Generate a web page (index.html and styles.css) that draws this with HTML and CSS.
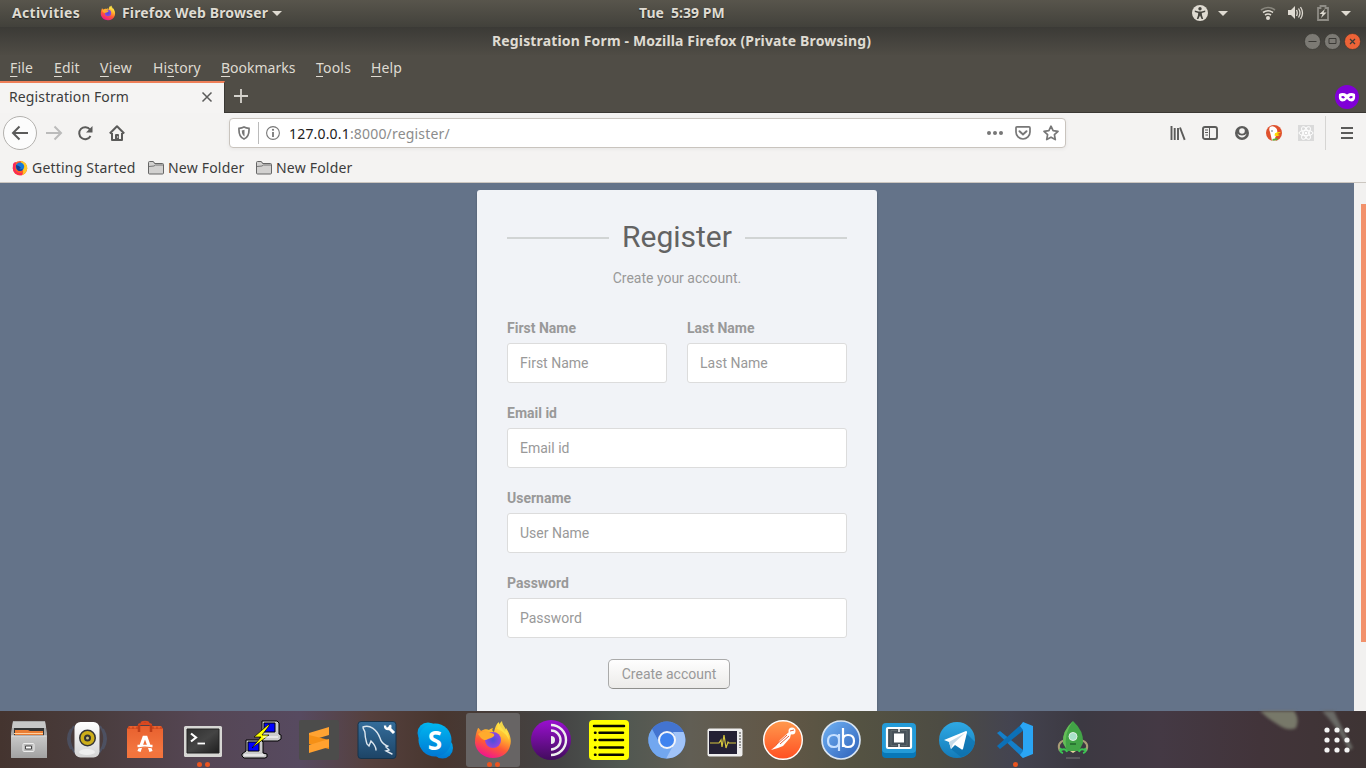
FILE: index.html
```
<!DOCTYPE html>
<html lang="en">
<head>
<meta charset="utf-8">
<title>Registration Form</title>
<link rel="stylesheet" href="styles.css">
</head>
<body>
<svg width="0" height="0" class="defs">
  <defs>
    <linearGradient id="g-flame" x1=".8" y1="0" x2=".35" y2="1"><stop offset="0" stop-color="#fff04a"/><stop offset=".35" stop-color="#ffb92e"/><stop offset=".65" stop-color="#ff5a35"/><stop offset="1" stop-color="#ef1490"/></linearGradient>
    <radialGradient id="g-globe"><stop offset="0" stop-color="#4a50d8"/><stop offset="1" stop-color="#9146e0"/></radialGradient>
    <linearGradient id="g-grey" x1="0" y1="0" x2="0" y2="1"><stop offset="0" stop-color="#c9c9c9"/><stop offset="1" stop-color="#a2a2a2"/></linearGradient>
    <linearGradient id="g-white" x1="0" y1="0" x2="0" y2="1"><stop offset="0" stop-color="#fff"/><stop offset="1" stop-color="#d4d4d4"/></linearGradient>
    <linearGradient id="g-orange" x1="0" y1="0" x2="0" y2="1"><stop offset="0" stop-color="#e8602e"/><stop offset="1" stop-color="#f67c45"/></linearGradient>
    <linearGradient id="g-term" x1="0" y1="0" x2="1" y2="1"><stop offset="0" stop-color="#303030"/><stop offset=".5" stop-color="#444"/><stop offset="1" stop-color="#1f1f1f"/></linearGradient>
    <linearGradient id="g-mysql" x1="0" y1="0" x2="0" y2="1"><stop offset="0" stop-color="#346d9b"/><stop offset="1" stop-color="#1d4466"/></linearGradient>
    <linearGradient id="g-skype" x1="0" y1="0" x2="0" y2="1"><stop offset="0" stop-color="#00b7f0"/><stop offset="1" stop-color="#0078d4"/></linearGradient>
    <linearGradient id="g-tor" x1="0" y1="0" x2="0" y2="1"><stop offset="0" stop-color="#9a0fd0"/><stop offset="1" stop-color="#420c5d"/></linearGradient>
    <linearGradient id="g-post" x1="0" y1="0" x2="0" y2="1"><stop offset="0" stop-color="#ff9a4e"/><stop offset="1" stop-color="#ff4f22"/></linearGradient>
    <linearGradient id="g-qb" x1="0" y1="0" x2="1" y2="1"><stop offset="0" stop-color="#72b4f5"/><stop offset="1" stop-color="#2c5fb8"/></linearGradient>
    <linearGradient id="g-tg" x1="0" y1="0" x2="0" y2="1"><stop offset="0" stop-color="#2fa9e4"/><stop offset="1" stop-color="#147cba"/></linearGradient>
    <symbol id="firefox" viewBox="0 0 40 40">
      <path fill="url(#g-flame)" d="M5 8c1 0 2 2 3 3 3-2 6-2 8-1 1-1 3-2 4-2-1 2-1 3 1 4 1-4 2-8 5-10 0 4 3 6 6 10l1-4c4 6 6 12 4 18-2 8-9 12-17 12C10 38 3 31 2 23c0-6 1-10 3-15z"/>
      <circle cx="20" cy="20" r="8" fill="url(#g-globe)"/>
      <path fill="#ffab2d" d="M5 14c4-3 9-3 12-1 3 0 5 1 4 3-2 2-4 2-6 3-2 2-5 1-7-1z"/>
      <path fill="#ffe047" d="M24 9c1-4 3-6 5-8 0 5 7 9 7 19-2-5-6-9-12-11z" opacity=".9"/>
    </symbol>
  </defs>
</svg>

<header class="topbar">
  <span class="activities">Activities</span>
  <svg class="app-logo" width="16" height="16"><use href="#firefox"/></svg>
  <span class="app-name">Firefox Web Browser</span>
  <i class="caret"></i>
  <span class="clock">Tue&nbsp; 5:39 PM</span>
  <div class="tray">
    <svg width="16" height="16" viewBox="0 0 16 16"><circle cx="8" cy="8" r="8" fill="#dfdbd2"/><circle cx="8" cy="3.700" r="1.700" fill="#45443e"/><path d="M2.800 5.400l3.700 1h3l3.700-1v1.500l-3.400 1.100.2 2.200 1.200 3.800H9.600L8 10.500 6.400 14H4.800L6 10.200 6.200 8 2.800 6.900z" fill="#45443e"/></svg>
    <i class="caret"></i>
    <svg class="wifi" width="16" height="16" viewBox="0 0 16 16" fill="none" stroke="#dfdbd2" stroke-width="1.600"><path d="M1 5q7-5 14 0" opacity=".4"/><path d="M3 7.500q5-3.500 10 0M5 10q3-2 6 0"/><circle cx="8" cy="13" r="2" fill="#dfdbd2" stroke="none"/></svg>
    <svg class="sound" width="17" height="16" viewBox="0 0 17 16"><path d="M1 5h3l4-4v13l-4-4H1z" fill="#dfdbd2"/><path d="M9.500 5q1.500 3 0 6M11.500 3.500q3 4.500 0 9M13.500 2q4 6 0 12" fill="none" stroke="#dfdbd2" stroke-width="1.300"/></svg>
    <svg class="battery" width="12" height="16" viewBox="0 0 12 16"><path d="M1 3h2.500V1h5v2H11v12H1z" fill="none" stroke="#8e8c85" stroke-width="1.800"/><path d="M8 4L2.500 9H5.500L4 13l5.500-5.500h-3z" fill="#dfdbd2"/></svg>
    <i class="caret"></i>
  </div>
</header>

<div class="titlebar">
  <span class="window-title">Registration Form - Mozilla Firefox (Private Browsing)</span>
  <div class="window-buttons">
    <svg width="17" height="17" viewBox="0 0 17 17"><circle cx="8.500" cy="8.500" r="8" fill="#7c7a74" stroke="#33322e" stroke-width=".6"/><path d="M4.500 8.500h8" stroke="#3c3b37"/></svg>
    <svg width="17" height="17" viewBox="0 0 17 17"><circle cx="8.500" cy="8.500" r="8" fill="#7c7a74" stroke="#33322e" stroke-width=".6"/><path d="M5 5.500h7v5H5z" fill="none" stroke="#3c3b37"/></svg>
    <svg width="17" height="17" viewBox="0 0 17 17"><circle cx="8.500" cy="8.500" r="8" fill="#ed6337" stroke="#33322e" stroke-width=".6"/><path d="M6 6l5 5m0-5l-5 5" stroke="#3c3b37" stroke-width="1.300"/></svg>
  </div>
</div>

<nav class="menubar">
  <span class="m-file"><u>F</u>ile</span><span class="m-edit"><u>E</u>dit</span><span class="m-view"><u>V</u>iew</span><span class="m-history">Hi<u>s</u>tory</span><span class="m-bookmarks"><u>B</u>ookmarks</span><span class="m-tools"><u>T</u>ools</span><span class="m-help"><u>H</u>elp</span>
</nav>

<div class="tabs">
  <div class="tab"><span>Registration Form</span>
    <svg width="12" height="12" viewBox="0 0 12 12"><path d="M1.500 1.500l9 9m0-9l-9 9" stroke="#5b5b5a" stroke-width="1.500"/></svg>
  </div>
  <svg class="new-tab" width="14" height="14" viewBox="0 0 14 14"><path d="M7 0v14M0 7h14" stroke="#d5d3cd" stroke-width="1.800"/></svg>
  <svg class="mask" width="24" height="24" viewBox="0 0 24 24"><circle cx="12" cy="12" r="12" fill="#8000d7"/><path d="M4 9q4-2 8 .5Q16 7 20 9q1 7-3 7.500-3 0-5-2.500-2 2.500-5 2.500Q3 16 4 9z" fill="#fff"/><path d="M6 12q2-2 4 .5-2 2-4-.5m8 .5q2-2.500 4-.5-2 2.500-4 .5" fill="#8000d7"/></svg>
</div>

<div class="toolbar">
  <div class="back"><svg width="18" height="16" viewBox="0 0 18 16"><path d="M17 8H2m6.500-6.500L2 8l6.500 6.500" fill="none" stroke="#5b5b5a" stroke-width="2"/></svg></div>
  <svg class="fwd" width="18" height="16" viewBox="0 0 18 16"><path d="M1 8h15M9.500 1.500L16 8l-6.500 6.500" fill="none" stroke="#bbb" stroke-width="2"/></svg>
  <svg class="reload" width="16" height="16" viewBox="0 0 16 16"><path d="M13 4.500A6 6 0 1 0 13.500 11" fill="none" stroke="#5b5b5a" stroke-width="2"/><path d="M15.500 1v6.500H9z" fill="#5b5b5a"/></svg>
  <svg class="home" width="16" height="16" viewBox="0 0 16 16"><path d="M.8 8.500L8 1.300l7.200 7.200M3 8v7h10V8" fill="none" stroke="#5b5b5a" stroke-width="2" stroke-linejoin="round"/><path d="M6 15v-5q0-1 1-1h2q1 0 1 1v5z" fill="#5b5b5a"/><circle cx="8.700" cy="12" r=".7" fill="#f4f3f2"/></svg>
  <div class="urlbar">
    <svg width="12" height="14" viewBox="0 0 12 14"><path d="M1 2.300Q4 2 6 1q2 1 5 1.300Q11.500 11 6 13 .5 11 1 2.300z" fill="none" stroke="#777" stroke-width="1.700"/><path d="M6.500 3.800v6.700Q3.800 9 3.800 4.500z" fill="#777"/></svg>
    <i class="url-sep"></i>
    <svg width="14" height="14" viewBox="0 0 14 14"><circle cx="7" cy="7" r="6.400" fill="none" stroke="#777" stroke-width="1.100"/><path d="M7 6v5" stroke="#777" stroke-width="1.800"/><circle cx="7" cy="3.800" r="1.100" fill="#777"/></svg>
    <span class="url"><b>127.0.0.1</b>:8000/register/</span>
    <svg class="dots" width="16" height="16" viewBox="0 0 16 16" fill="#777"><circle cx="2" cy="8" r="2"/><circle cx="8" cy="8" r="2"/><circle cx="14" cy="8" r="2"/></svg>
    <svg class="pocket" width="16" height="16" viewBox="0 0 16 16" fill="none" stroke="#777" stroke-width="1.700"><path d="M2 1.900h12q1 0 1 1V7a7 7 0 0 1-14 0V2.900q0-1 1-1z"/><path d="M4.500 6.200L8 9.500l3.500-3.300" stroke-width="2" stroke-linecap="round"/></svg>
    <svg class="star" width="16" height="16" viewBox="0 0 16 16"><path d="M8 1.200l2.100 4.500 4.900.6-3.600 3.400.9 4.900L8 12.200l-4.300 2.400.9-4.900L1 6.300l4.900-.6z" fill="none" stroke="#777" stroke-width="1.700" stroke-linejoin="round"/></svg>
  </div>
  <div class="tools">
    <svg width="16" height="16" viewBox="0 0 16 16"><path d="M1.500 1v14M4.700 3v12M8 3v12" stroke="#5b5b5a" stroke-width="1.900"/><path d="M10 2.500l4.700 12.300" stroke="#5b5b5a" stroke-width="1.900"/></svg>
    <svg width="16" height="16" viewBox="0 0 16 16" fill="none" stroke="#5b5b5a"><rect x="1" y="2" width="14" height="12" rx="2" stroke-width="1.900"/><path d="M7.500 2v12M3 5h3M3 7.500h3M3.500 10H6" stroke-width="1"/></svg>
    <svg width="16" height="16" viewBox="0 0 16 16"><circle cx="8" cy="8" r="7" fill="#5b5b5a"/><circle cx="8" cy="6" r="2.800" fill="#f4f3f2"/><path d="M3.300 8.500q1.700 4 4.700 4t4.700-4q-1.700 2-4.700 2t-4.700-2z" fill="#f4f3f2"/></svg>
    <svg width="16" height="16" viewBox="0 0 16 16"><circle cx="8" cy="8" r="8" fill="#df512d"/><path d="M4 2q3-2 6 1 2 2 1 6l-2 4 1 2.500-4 .3Q5 11 4 7 2.500 4 4 2z" fill="#fff"/><path d="M9 8.200q4-2 6-.8l-4 1.600 3 1q-3 2-5.500.5z" fill="#fd0"/><path d="M6.500 14l5-1v2l-5 .8z" fill="#55b33b"/><circle cx="6" cy="6" r=".7" fill="#345"/></svg>
    <svg width="16" height="16" viewBox="0 0 16 16"><path fill="#dadada" d="M0 0h16v16H0z"/><g fill="none" stroke="#fff"><ellipse cx="8" cy="8" rx="7" ry="2.700"/><ellipse cx="8" cy="8" rx="7" ry="2.700" transform="rotate(60 8 8)"/><ellipse cx="8" cy="8" rx="7" ry="2.700" transform="rotate(120 8 8)"/></g><circle cx="8" cy="8" r="1.300" fill="#fff"/></svg>
  </div>
  <i class="tool-sep"></i>
  <svg class="burger" width="12" height="12" viewBox="0 0 12 12"><path d="M0 1h12M0 6h12M0 11h12" stroke="#5b5b5a" stroke-width="2"/></svg>
</div>

<div class="bookmarks">
  <svg width="16" height="16" viewBox="0 0 16 16"><circle cx="8" cy="8.300" r="7.200" fill="#ff5a28"/><path d="M1 4q1-2 3-2L3 9q1 5 8 4l-1 2.300Q1 15 .8 8z" fill="#f8285c"/><path d="M9 .8q7 2.200 6.200 8.200-1.200 5-5.200 6.200Q13 10 9 6z" fill="#ffc928"/><circle cx="8" cy="6.800" r="4.200" fill="#1479da"/><path d="M4 5l3 1 2 2-2 1q2 1 4-.5-1 3-4 2.500Q4 10 4 5z" fill="#143c90"/></svg>
  <span class="bm-start">Getting Started</span>
  <svg class="folder" width="16" height="14" viewBox="0 0 16 14"><path d="M.5 12V1.500q0-1 1-1H5q1 0 1.500 2h8q1 0 1 1V12q0 1-1 1h-13q-1 0-1-1z" fill="#d2d1d0" stroke="#666"/><path d="M1 5.500l5-.5 1.500-1H15" fill="none" stroke="#777"/></svg>
  <span class="bm-folder">New Folder</span>
  <svg class="folder" width="16" height="14" viewBox="0 0 16 14"><path d="M.5 12V1.500q0-1 1-1H5q1 0 1.500 2h8q1 0 1 1V12q0 1-1 1h-13q-1 0-1-1z" fill="#d2d1d0" stroke="#666"/><path d="M1 5.500l5-.5 1.500-1H15" fill="none" stroke="#777"/></svg>
  <span class="bm-folder">New Folder</span>
</div>

<main class="viewport">
  <div class="page">
    <form class="card">
      <div class="heading"><h1>Register</h1></div>
      <p class="hint">Create your account.</p>
      <div class="row">
        <label class="field"><span>First Name</span><input placeholder="First Name"></label>
        <label class="field"><span>Last Name</span><input placeholder="Last Name"></label>
      </div>
      <label class="field"><span>Email id</span><input placeholder="Email id"></label>
      <label class="field"><span>Username</span><input placeholder="User Name"></label>
      <label class="field"><span>Password</span><input type="password" placeholder="Password"></label>
      <button class="submit" type="button">Create account</button>
    </form>
  </div>
  <div class="scrollbar"><div class="thumb"></div></div>
</main>

<footer class="dock">
  <div class="app"><svg viewBox="0 0 40 40"><path d="M4 1h32l2 12v24q0 1-1 1H3q-1 0-1-1V13z" fill="#a9a9a9"/><path d="M4 2h32l1 6H3z" fill="#c7c7c7"/><path fill="#333" d="M5 8h30v9H5z"/><path fill="#e97d34" d="M6 10h13l2 1h13v4H6z"/><path d="M5 13.500h29" stroke="#ffd0a0"/><path d="M2 15.500h36V38H3q-1 0-1-1z" fill="url(#g-grey)"/><path d="M2.500 16h35" stroke="#ddd"/><rect x="14" y="23.500" width="11" height="8" rx="1" fill="#bbb" stroke="#eee"/><path d="M16.500 26h6v3h-6z" fill="#fff" stroke="#444"/></svg></div>
  <div class="app"><svg viewBox="0 0 40 40"><path d="M7 6q-9 13 1 27M4 9q-6 10 0 20M33 6q9 13-1 27M36 9q6 10 0 20" fill="none" stroke="#50688c" stroke-width="2" opacity=".45"/><rect x="7.500" y="2" width="25" height="35.500" rx="6" fill="url(#g-white)"/><circle cx="20.500" cy="18" r="8.500" fill="#353535"/><circle cx="20.500" cy="18" r="7" fill="#cdae19"/><circle cx="20.500" cy="18" r="3.500" fill="#333"/><circle cx="20.500" cy="18" r="1.500" fill="#c9c080"/><ellipse cx="20" cy="32" rx="8" ry="3" fill="#eee"/></svg></div>
  <div class="app"><svg viewBox="0 0 40 40"><path d="M14 12V5q0-1 2-1h8q2 0 2 1v7M16 3q4-2.500 8 0" fill="none" stroke="#d9481f" stroke-width="2.200"/><path d="M2 9l2-3h32l2 3v29H2z" fill="url(#g-orange)"/><path d="M2 9l2-3 2 3 2-3 2 3 2-3 2 3m12 0l2-3 2 3 2-3 2 3 2-3 2 3" fill="#d24a1f"/><path d="M14 5v7m12-7v7" stroke="#bd3d18" stroke-width="2.500"/><path d="M2 32h36v6H2z" fill="#f3743d"/><path d="M14 31.500l5-14h2l5 14" fill="none" stroke="#fff" stroke-width="3.300"/><path d="M12.500 26h15" stroke="#fff" stroke-width="2.500"/><path d="M12.500 28q7-2 14-.3" stroke="#f0713b" fill="none"/></svg></div>
  <div class="app"><svg viewBox="0 0 40 40"><rect x="1" y="6" width="38" height="31" rx="1.500" fill="#d7d7d4"/><path fill="url(#g-term)" stroke="#222" d="M4 9h32v24H4z"/><path d="M8 13.500l5 4-5 4" fill="none" stroke="#fff" stroke-width="2.200"/><path d="M14.500 23.500H22" stroke="#fff" stroke-width="1.800"/></svg><i class="dot"></i><i class="dot"></i></div>
  <div class="app"><svg viewBox="0 0 40 40" stroke="#000"><path d="M21 1h15l2 2v11l2 1v4l-3 2H22l-3-2v-4l2-2z" fill="#ccc"/><path d="M23 3h11v9H23z" fill="#00f"/><path d="M5 20h15l2 2v11l4 1v3l-2 1H3l-2-2v-2l4-3z" fill="#ccc"/><path d="M7 22h11v9H7z" fill="#00f"/><path d="M28 4L13 17h7l-9 11 17-13h-7l7-9z" fill="#ff0" stroke-width=".7"/><path d="M3 35h20M22 17h15" stroke="#fff"/></svg></div>
  <div class="app"><svg viewBox="0 0 40 40"><rect width="40" height="40" rx="2" fill="#4c4c4b"/><path d="M10 13l20-6v8l-20 6z" fill="#ffa332"/><path d="M10 15l20 5v9l-20-5z" fill="#f59016"/><path d="M10 25l20-6v8l-20 6z" fill="#ffa12f"/></svg></div>
  <div class="app"><svg viewBox="0 0 40 40"><rect x="1" y="1.500" width="38" height="37" rx="3" fill="url(#g-mysql)" stroke="#16334b"/><path d="M6 7c7-3 14 3 17 11 1 4 3 6 7 8M6 7c0 3 2 3 2 6 0 5 1 7 2 11l2 2 2-5c3 3 5 5 5 9M31 26l-2 1 3 3-3 1 6 3" fill="none" stroke="#dce6ee" stroke-width="1.400" stroke-linecap="round"/><path d="M31 7l6 6" stroke="#fff" stroke-width="3"/><path d="M28 5.500q0 4 4 3.500 2-1 1-4" fill="none" stroke="#fff" stroke-width="2.400"/></svg></div>
  <div class="app"><svg viewBox="0 0 40 40" fill="url(#g-skype)"><circle cx="13" cy="13" r="10.500"/><circle cx="27.500" cy="28" r="10.500"/><circle cx="20" cy="20" r="16.500"/><text x="20" y="29.500" class="skype-s">S</text></svg></div>
  <div class="app active"><svg viewBox="0 0 40 40"><use href="#firefox"/></svg><i class="dot"></i><i class="dot"></i></div>
  <div class="app"><svg viewBox="0 0 40 40"><circle cx="20" cy="20" r="20" fill="url(#g-tor)"/><g fill="none" stroke="#eee" stroke-width="2.400"><path d="M20 5a15 15 0 0 1 0 30M20 10.500a9.500 9.500 0 0 1 0 19"/></g><path d="M20 16a4 4 0 0 1 0 8z" fill="#eee"/></svg></div>
  <div class="app"><svg viewBox="0 0 40 40"><rect width="40" height="40" rx="4" fill="#ff0"/><path d="M5 6h30M10.500 12.700H34M10.500 20H34M10.500 27.500H34M10.500 34.700H34M6 12.700h.5M6 20h.5M6 27.500h.5M6 34.700h.5" stroke="#080800" stroke-width="2.500" stroke-linecap="round"/></svg></div>
  <div class="app"><svg viewBox="0 0 40 40"><circle cx="20" cy="20" r="18.500" fill="#568be0"/><path d="M20 12h16.500A18.500 18.500 0 0 0 5 9l8 15a8 8 0 0 1 7-12z" fill="#4374d0"/><path d="M5 9a18.500 18.500 0 0 0 14 29.500L26 27q-9 4-13-3z" fill="#72a7f0"/><path d="M28 12h8.500A18.500 18.500 0 0 1 19 38.500L27 24q3-6-1-12z" fill="#a0c3f8"/><circle cx="20" cy="20" r="9" fill="#f3f5fa"/><circle cx="20" cy="20" r="7" fill="#3f83ef"/></svg></div>
  <div class="app"><svg viewBox="0 0 40 40"><rect x="2.500" y="8.500" width="35" height="28" rx="2" fill="#eee"/><path fill="#242134" d="M4 11h28v23H4z"/><path d="M5 23h9l2-3 1 7 2-12 2 13 2-6 1 1h7" fill="none" stroke="#d5c63e" stroke-width="1.200"/><path d="M35 12v16" stroke="#999" stroke-width="2" stroke-dasharray="2 1"/></svg></div>
  <div class="app"><svg viewBox="0 0 40 40"><circle cx="20" cy="20" r="19.300" fill="url(#g-post)" stroke="#fff" stroke-width="1.400"/><circle cx="29" cy="11" r="3.500" fill="#fff"/><path d="M28 14l-2-2-9 8-4 6-5 4 7-2 5-2 7-8z" fill="#fff"/><path d="M13 25l11-10M17 24l9-8M27 11l4-1" stroke="#e75e36"/></svg></div>
  <div class="app"><svg viewBox="0 0 40 40"><circle cx="20" cy="20" r="19" fill="url(#g-qb)" stroke="#d8e4f2" stroke-width="1.700"/><g fill="none" stroke-width="2.200"><path d="M18 14v17M18 20q0-5-5-5-6 0-6 6t6 6q5 0 5-5" stroke="#c6e0ff"/><path d="M22 8v19M22 20q0-5 5-5 6 0 6 6t-6 6q-5 0-5-5" stroke="#fff"/></g></svg></div>
  <div class="app"><svg viewBox="0 0 40 40"><rect x="3" y="5" width="34" height="33" rx="4" fill="#0878b8"/><rect x="3" y="3" width="34" height="30" rx="4" fill="#249bd8"/><rect x="8" y="8" width="24" height="20" rx="1" fill="#475159" stroke="#fff" stroke-width="2.200"/><path d="M20 8v4m0 12v4" stroke="#fff" stroke-width="1.500"/><path fill="#fff" d="M15 13.500h10v9H15z"/><path d="M18 10.500h-6v15h6m4-15h6v15h-6" stroke="#5e686c" fill="none"/></svg></div>
  <div class="app"><svg viewBox="0 0 40 40"><circle cx="20" cy="20" r="18" fill="url(#g-tg)"/><path d="M14 29l15-16 9 9A18 18 0 0 1 24 37z" fill="#0a6aa6" opacity=".6"/><path d="M7 20L29 11q1.500 0 1 1.500L26 29q-.7 1-2 0l-6-4-4 4-2-7z" fill="#fff"/><path d="M12 22l16-9-12 11-2 5z" fill="#c5dae8"/></svg></div>
  <div class="app"><svg viewBox="0 0 40 40"><path d="M2 13l3-2 23 19v8z" fill="#147fca"/><path d="M2 26l3 3L29 10V2z" fill="#0c70b7"/><path d="M28 2l10 4v28l-10 4-3-3 3-4V10l-3-4z" fill="#2aa5f4"/></svg><i class="dot"></i></div>
  <div class="app"><svg viewBox="0 0 40 40"><path d="M12 20q-9 3-5 11m21-11q9 3 5 11" fill="none" stroke="#aa9d77" stroke-width="2"/><path d="M20 1q11 10 10 22l-4 8H14l-4-8Q9 11 20 1z" fill="#42a447"/><path d="M20 1q-9 12-7 27l-3-5Q9 11 20 1z" fill="#65bc58"/><circle cx="20" cy="16.500" r="4" fill="#a9e1ca" stroke="#e0eee4"/><path d="M17 24h6" stroke="#23672d" stroke-width="1.500"/><path d="M8 28q-2 4 2 5m-2-3q5-2 6 2m18-4q2 4-2 5m2-3q-5-2-6 2" fill="none" stroke="#3cc553" stroke-width="2"/><path d="M17 31h6l-3 2z" fill="#e3d49a"/><path d="M13 38h14" stroke="#777"/></svg></div>
  <svg class="grid" width="26" height="26" viewBox="0 0 26 26" fill="#f4f4f4"><circle cx="3" cy="3" r="2.600"/><circle cx="13" cy="3" r="2.600"/><circle cx="23" cy="3" r="2.600"/><circle cx="3" cy="13" r="2.600"/><circle cx="13" cy="13" r="2.600"/><circle cx="23" cy="13" r="2.600"/><circle cx="3" cy="23" r="2.600"/><circle cx="13" cy="23" r="2.600"/><circle cx="23" cy="23" r="2.600"/></svg>
  <svg class="petals" width="110" height="57" viewBox="0 0 110 57"><path d="M4 0h34q6 8 2 17-8 4-19-4Q12 8 4 0z" fill="#777869"/><path d="M66 0h12q6 14 19 37l-4 2Q82 16 66 0z" fill="#6a6a66"/></svg>
</footer>
</body>
</html>
```
FILE: styles.css
```
* { box-sizing: border-box; }
body { margin: 0; width: 1366px; height: 768px; overflow: hidden; display: flex; flex-direction: column; font: 14px/20px "Noto Sans", "Open Sans", sans-serif; color: #3c3c3c; }
svg { display: block; flex: none; }
span { white-space: nowrap; }
.defs { position: absolute; }

.topbar { height: 27px; flex: none; display: flex; align-items: center; padding: 0 15px 1px 12px; background: linear-gradient(#58554c, #42413b); color: #dfdbd2; font-weight: 700; text-shadow: 0 1px 1px #222; }
.activities { width: 88px; letter-spacing: .3px; }
.app-logo { margin-right: 6px; }
.app-name { width: 150px; letter-spacing: .15px; }
.caret { flex: none; border: 5px solid transparent; border-top-color: #dfdbd2; border-bottom: 0; }
.clock { margin-left: 357px; }
.tray { margin-left: auto; display: flex; align-items: center; }
.tray .caret { margin-left: 10px; }
.wifi { margin-left: 32px; }
.sound { margin-left: 11px; }
.battery { margin-left: 13px; margin-right: 2px; }

.titlebar { height: 28px; flex: none; display: flex; align-items: center; justify-content: flex-end; background: linear-gradient(#3b3a36, #4f4c45); color: #dfdbd2; font-weight: 700; padding-right: 5px; }
.window-title { width: 383px; margin-right: 429px; letter-spacing: .15px; }
.window-buttons { display: flex; gap: 3px; }

.menubar { height: 26px; flex: none; display: flex; align-items: center; gap: 20px; padding-left: 10px; background: #504d46; color: #dfdbd2; }
.menubar u { text-underline-offset: 3px; text-decoration-thickness: 1px; }
.m-file { width: 24px; letter-spacing: .2px; }
.m-edit { width: 26px; letter-spacing: .2px; }
.m-view { width: 33px; letter-spacing: .4px; }
.m-history { width: 48px; letter-spacing: .1px; }
.m-bookmarks { width: 75px; }
.m-tools { width: 35px; letter-spacing: .2px; }
.m-help { letter-spacing: .1px; }

.tabs { height: 32px; flex: none; display: flex; align-items: center; background: #504d46; border-bottom: 1px solid #3a3834; }
.tab { width: 225px; height: 32px; margin-bottom: -1px; align-self: flex-start; display: flex; align-items: center; justify-content: space-between; padding: 0 11px 2px 9px; background: #f5f4f3; border-top: 2px solid #ef7f58; border-right: 1px solid #3a3834; letter-spacing: .12px; }
.new-tab { margin: 0 0 2px 9px; }
.mask { margin-left: auto; margin-right: 7px; }

.toolbar { height: 40px; flex: none; display: flex; align-items: center; padding: 0 12px 0 3px; background: #f4f3f2; }
.back { width: 34px; height: 34px; border: 1px solid #b3b1ae; border-radius: 50%; background: #fcfcfc; display: flex; align-items: center; justify-content: center; }
.fwd { margin-left: 8px; }
.reload { margin-left: 14px; }
.home { margin-left: 16px; }
.urlbar { width: 837px; height: 30px; margin-left: 104px; display: flex; align-items: center; padding: 0 6px 0 8px; background: #fff; border: 1px solid #c9c4be; border-radius: 4px; box-shadow: 0 1px 4px rgba(0, 0, 0, .06); }
.url-sep { width: 1px; height: 22px; margin: 0 7px 0 8px; background: #bbb; }
.url { margin-left: 9px; padding-top: 1px; color: #8c8c8c; letter-spacing: .18px; }
.url b { font-weight: 400; color: #222; }
.dots { margin-left: auto; }
.pocket, .star { margin-left: 12px; }
.tools { display: flex; gap: 16px; margin-left: 104px; }
.tool-sep { width: 1px; height: 34px; margin-left: 11px; background: #d6d5d3; }
.burger { margin-left: auto; margin-right: 1px; }

.bookmarks { height: 30px; flex: none; display: flex; align-items: center; padding-left: 12px; background: #f4f3f2; border-bottom: 1px solid #cbc6c0; letter-spacing: .2px; }
.bm-start { width: 104px; margin-left: 4px; margin-right: 12px; }
.bm-folder { width: 76px; margin-left: 4px; margin-right: 12px; }

.viewport { height: 528px; flex: none; display: flex; overflow: hidden; }
.page { width: 1354px; background: #647389; }
.card { width: 400px; height: 560px; margin: 7px auto 0; padding: 24px 30px; background: #f1f3f7; border-radius: 3px; box-shadow: 0 2px 2px rgba(0, 0, 0, .3); font-family: Roboto, sans-serif; color: #999; display: flex; flex-direction: column; }
.heading { height: 46px; display: flex; align-items: center; gap: 13px; }
.heading::before, .heading::after { content: ""; height: 2px; flex: 1; margin-top: 2px; background: #d1d4d4; }
.heading h1 { margin: 0; width: 110px; font-size: 30px; line-height: 46px; font-weight: 400; color: #636363; }
.hint { margin: 8px 0 30px; text-align: center; font-size: 14px; line-height: 20px; }
.row { display: flex; gap: 20px; }
.field { flex: 1 1 0; display: flex; flex-direction: column; }
.card > .field { flex: none; }
.field span { font-size: 14px; font-weight: 700; line-height: 20px; margin-bottom: 5px; }
.field input { width: 100%; height: 40px; margin: 0 0 20px; padding: 0 12px; border: 1px solid #dcdcdc; border-radius: 3px; background: #fff; font: 14px Roboto, sans-serif; }
.field input::placeholder { color: #999; opacity: 1; }
.submit { width: 122px; height: 30px; margin: 1px 0 0 101px; padding: 0; border: 1px solid #aaa; border-bottom-color: #8f8f8c; border-radius: 5px; background: linear-gradient(#fefefe, #ecebe9); color: #999; font: 14px Roboto, sans-serif; }
.scrollbar { width: 12px; padding: 21px 0 0 7px; background: #f2f1f0; }
.thumb { height: 438px; background: #f2916b; }

.dock { position: relative; height: 57px; flex: none; display: flex; align-items: flex-start; gap: 4px; padding: 2px 16px 0 2px; background: linear-gradient(90deg, #44342f 0, #493c3c 90px, #554654 200px, #574a60 300px, #55403d 370px, #48362f 440px, #444 560px, #505751 620px, #615e54 690px, #625746 780px, #555342 850px, #4d4c43 940px, #444450 1010px, #3c3942 1080px, #443944 1160px, #42343a 1260px, #3e3434 1366px); }
.app { width: 54px; height: 54px; flex: none; display: flex; flex-wrap: wrap; justify-content: center; align-content: flex-start; column-gap: 3px; padding-top: 7px; border-radius: 3px; }
.app svg { width: 40px; height: 40px; margin: 0 7px; overflow: visible; }
.active { background: #676464; }
.dot { width: 5px; height: 5px; margin-top: 2px; border-radius: 50%; background: #e95420; }
.skype-s { font: 700 26px "Open Sans", sans-serif; text-anchor: middle; fill: #fff; }
.grid { position: relative; z-index: 1; margin: 14px 0 0 auto; }
.petals { position: absolute; left: 1256px; top: 0; filter: blur(1.500px); }
```
